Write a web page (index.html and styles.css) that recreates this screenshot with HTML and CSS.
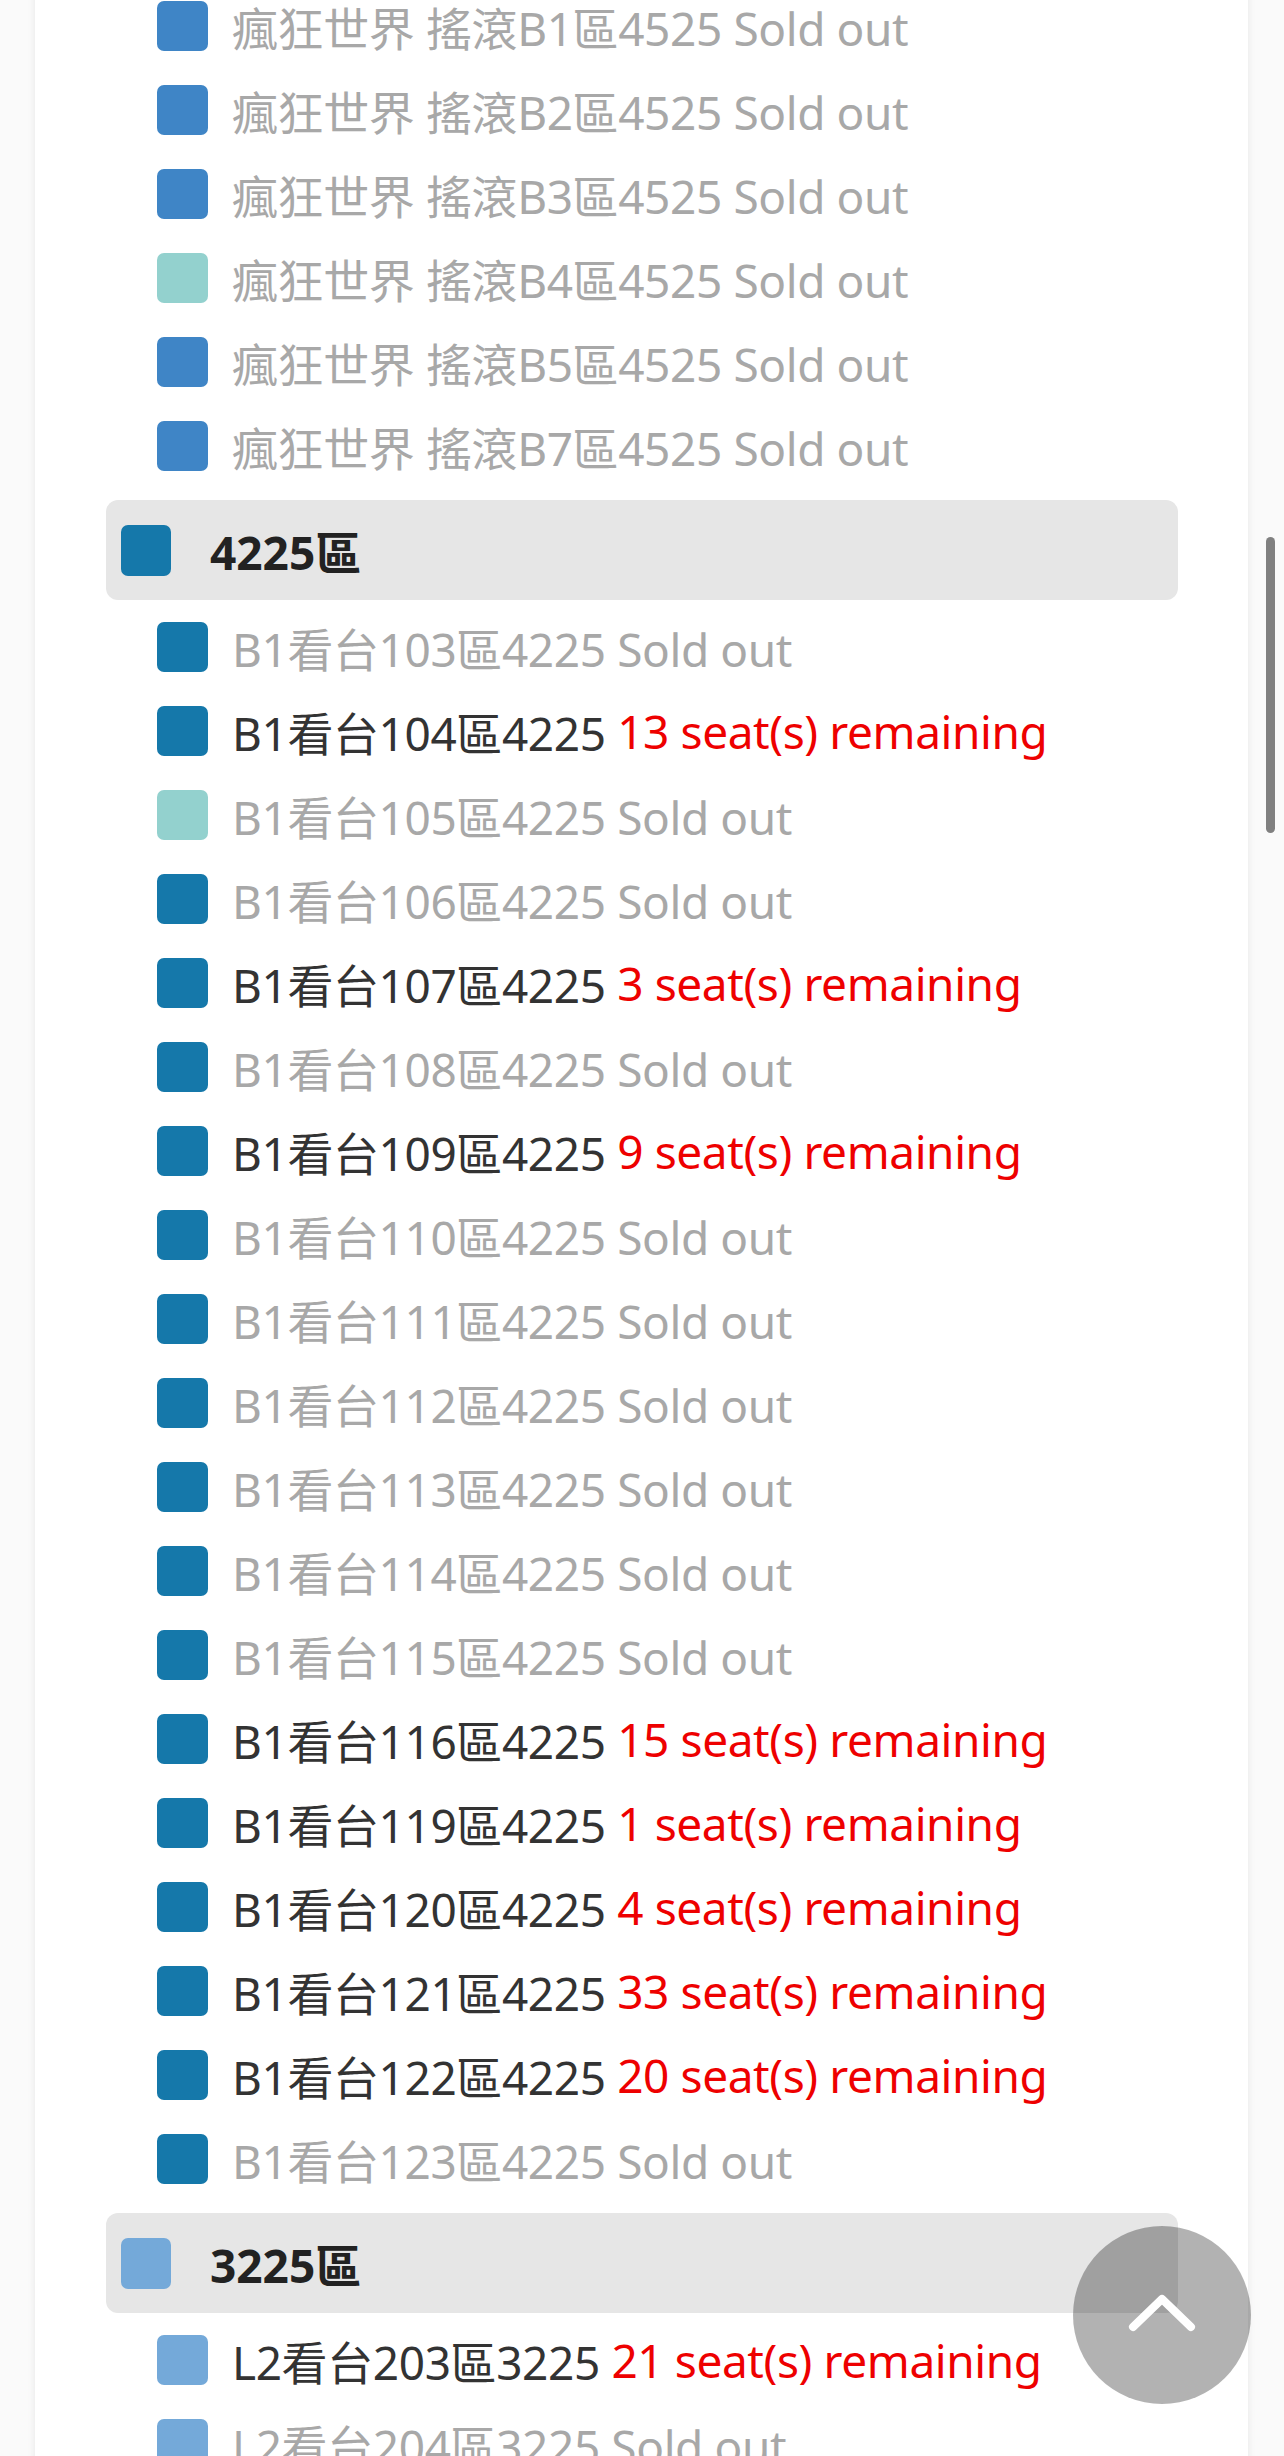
FILE: index.html
```html
<!DOCTYPE html>
<html>
<head>
    <title>Seat areas</title>
    <link rel="stylesheet" href="styles.css">
</head>
<body>
    <div class="card">
      <!-- 4525 group, its header is scrolled out of view -->
      <ul class="areas areas--first">
        <li class="area sold"><span class="swatch c-4525"></span>瘋狂世界 搖滾B1區4525 Sold out</li>
        <li class="area sold"><span class="swatch c-4525"></span>瘋狂世界 搖滾B2區4525 Sold out</li>
        <li class="area sold"><span class="swatch c-4525"></span>瘋狂世界 搖滾B3區4525 Sold out</li>
        <li class="area sold"><span class="swatch c-teal"></span>瘋狂世界 搖滾B4區4525 Sold out</li>
        <li class="area sold"><span class="swatch c-4525"></span>瘋狂世界 搖滾B5區4525 Sold out</li>
        <li class="area sold"><span class="swatch c-4525"></span>瘋狂世界 搖滾B7區4525 Sold out</li>
      </ul>

      <div class="group-head"><span class="swatch c-4225"></span>4225區</div>
      <ul class="areas">
        <li class="area sold"><span class="swatch c-4225"></span>B1看台103區4225 Sold out</li>
        <li class="area"><span class="swatch c-4225"></span>B1看台104區4225 <span class="left">13 seat(s) remaining</span></li>
        <li class="area sold"><span class="swatch c-teal"></span>B1看台105區4225 Sold out</li>
        <li class="area sold"><span class="swatch c-4225"></span>B1看台106區4225 Sold out</li>
        <li class="area"><span class="swatch c-4225"></span>B1看台107區4225 <span class="left">3 seat(s) remaining</span></li>
        <li class="area sold"><span class="swatch c-4225"></span>B1看台108區4225 Sold out</li>
        <li class="area"><span class="swatch c-4225"></span>B1看台109區4225 <span class="left">9 seat(s) remaining</span></li>
        <li class="area sold"><span class="swatch c-4225"></span>B1看台110區4225 Sold out</li>
        <li class="area sold"><span class="swatch c-4225"></span>B1看台111區4225 Sold out</li>
        <li class="area sold"><span class="swatch c-4225"></span>B1看台112區4225 Sold out</li>
        <li class="area sold"><span class="swatch c-4225"></span>B1看台113區4225 Sold out</li>
        <li class="area sold"><span class="swatch c-4225"></span>B1看台114區4225 Sold out</li>
        <li class="area sold"><span class="swatch c-4225"></span>B1看台115區4225 Sold out</li>
        <li class="area"><span class="swatch c-4225"></span>B1看台116區4225 <span class="left">15 seat(s) remaining</span></li>
        <li class="area"><span class="swatch c-4225"></span>B1看台119區4225 <span class="left">1 seat(s) remaining</span></li>
        <li class="area"><span class="swatch c-4225"></span>B1看台120區4225 <span class="left">4 seat(s) remaining</span></li>
        <li class="area"><span class="swatch c-4225"></span>B1看台121區4225 <span class="left">33 seat(s) remaining</span></li>
        <li class="area"><span class="swatch c-4225"></span>B1看台122區4225 <span class="left">20 seat(s) remaining</span></li>
        <li class="area sold"><span class="swatch c-4225"></span>B1看台123區4225 Sold out</li>
      </ul>

      <div class="group-head"><span class="swatch c-3225"></span>3225區</div>
      <ul class="areas">
        <li class="area"><span class="swatch c-3225"></span>L2看台203區3225 <span class="left">21 seat(s) remaining</span></li>
        <li class="area sold"><span class="swatch c-3225"></span>L2看台204區3225 Sold out</li>
      </ul>
    </div>

    <div class="scrollbar"></div>

    <button class="to-top" aria-label="Back to top">
      <svg width="70" height="42" viewBox="0 0 70 42">
        <polyline points="6,36 35,8 64,36" fill="none" stroke="#fff" stroke-width="8" stroke-linecap="round" stroke-linejoin="round"/>
      </svg>
    </button>
</body>
</html>
```

FILE: styles.css
```css
html, body {
  margin: 0;
  background: #fafafa;
  height: 100%;
  overflow: hidden;
}

body {
  font-family: "Noto Sans", "Noto Sans CJK TC", sans-serif;
  font-size: 46px;
}

.card {
  margin: 0 36px 0 35px;
  padding: 0 70px 0 71px;
  background: #fff;
  box-shadow: 0 0 8px rgba(0, 0, 0, 0.08);
  min-height: 100%;
}

.areas {
  list-style: none;
  margin: 0;
  padding: 0 0 0 51px;
}

.areas--first {
  margin-top: -16px;
}

.area {
  display: flex;
  align-items: center;
  height: 84px;
  color: #333;
  white-space: pre;
  letter-spacing: -0.4px;
}

.area.sold {
  color: #a8a8a8;
}

.area .left {
  color: #ee0000;
}

.swatch {
  flex: none;
  width: 51px;
  height: 50px;
  border-radius: 7px;
  margin-right: 24px;
}

.c-4525 { background-color: #3f85c6; }
.c-teal { background-color: #93d1ce; }
.c-4225 { background-color: #1578aa; }
.c-3225 { background-color: #74a9d9; }

.group-head {
  display: flex;
  align-items: center;
  height: 100px;
  margin: 12px 0 5px;
  padding-left: 15px;
  background: #e6e6e6;
  border-radius: 12px;
  font-weight: bold;
  color: #222;
}

.group-head .swatch {
  width: 50px;
  height: 51px;
  margin-right: 39px;
}

.scrollbar {
  position: fixed;
  right: 9px;
  top: 537px;
  width: 9px;
  height: 296px;
  border-radius: 5px;
  background: #808080;
}

.to-top {
  position: fixed;
  right: 33px;
  bottom: 52px;
  width: 178px;
  height: 178px;
  border: 0;
  border-radius: 50%;
  background: rgba(0, 0, 0, 0.3);
  display: flex;
  align-items: center;
  justify-content: center;
  padding: 0 0 6px;
}
```
